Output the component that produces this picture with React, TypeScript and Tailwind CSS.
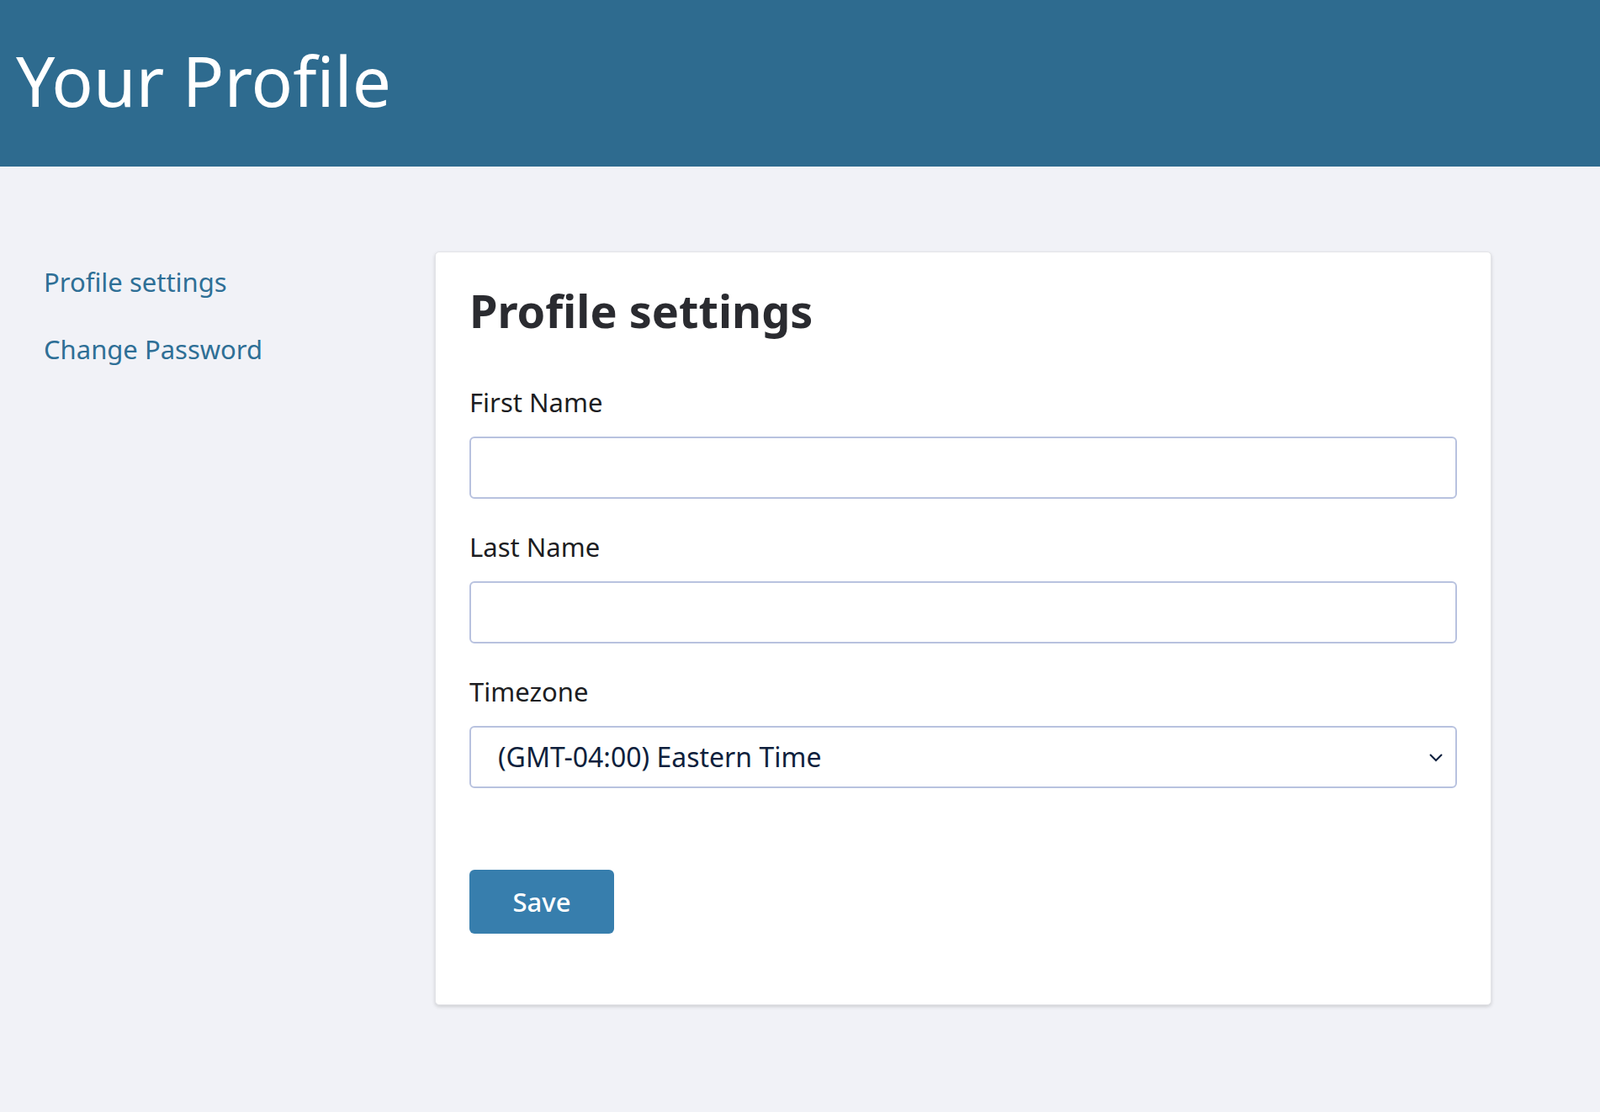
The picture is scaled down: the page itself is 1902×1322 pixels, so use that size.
const App = () => {
  const field = "block w-full h-[74px] rounded-[6px] border-2 border-[#b8c2df] bg-white px-8 text-[32px] text-[#0f1f3d] outline-none";

  return (
    <div className="min-h-[1322px] bg-[#f1f2f7] font-['Roboto',sans-serif]">
      <header className="h-[198px] bg-[#2e6b8f] flex items-center px-[19px]">
        <h1 className="text-[82px] font-normal text-white leading-none -mt-[8px]">Your Profile</h1>
      </header>

      <div className="flex pt-[101px]">
        <nav className="w-[517px] pl-[52px] pt-[18px] flex flex-col gap-[44px]">
          <a href="#" className="text-[31px] leading-[36px] text-[#2e6f96]">Profile settings</a>
          <a href="#" className="text-[31px] leading-[36px] text-[#2e6f96]">Change Password</a>
        </nav>

        <main className="w-[1256px] h-[896px] rounded-[5px] bg-white shadow-[0_2px_4px_rgba(0,0,0,0.15)] border border-[#e3e4e8] px-[40px] pt-[38px]">
          <h2 className="text-[54px] font-bold leading-[62px] text-[#2a2b30]">Profile settings</h2>

          <label className="block mt-[60px] text-[31px] leading-[36px] text-[#1c1d22]">First Name</label>
          <input className={`${field} mt-[23px]`} />

          <label className="block mt-[39px] text-[31px] leading-[36px] text-[#1c1d22]">Last Name</label>
          <input className={`${field} mt-[23px]`} />

          <label className="block mt-[39px] text-[31px] leading-[36px] text-[#1c1d22]">Timezone</label>
          <div className="relative mt-[23px]">
            <select className={`${field} appearance-none`} defaultValue="et">
              <option value="et">(GMT-04:00) Eastern Time</option>
            </select>
            <svg className="absolute right-[16px] top-[30px] w-[18px] h-[14px] pointer-events-none" viewBox="0 0 18 14" fill="none" stroke="#0f1f3d" strokeWidth="2">
              <path d="M2 4l7 7 7-7" />
            </svg>
          </div>

          <button className="mt-[97px] w-[172px] h-[76px] rounded-[6px] bg-[#377ead] text-white text-[31px] font-medium">Save</button>
        </main>
      </div>
    </div>
  );
};

export default App;
